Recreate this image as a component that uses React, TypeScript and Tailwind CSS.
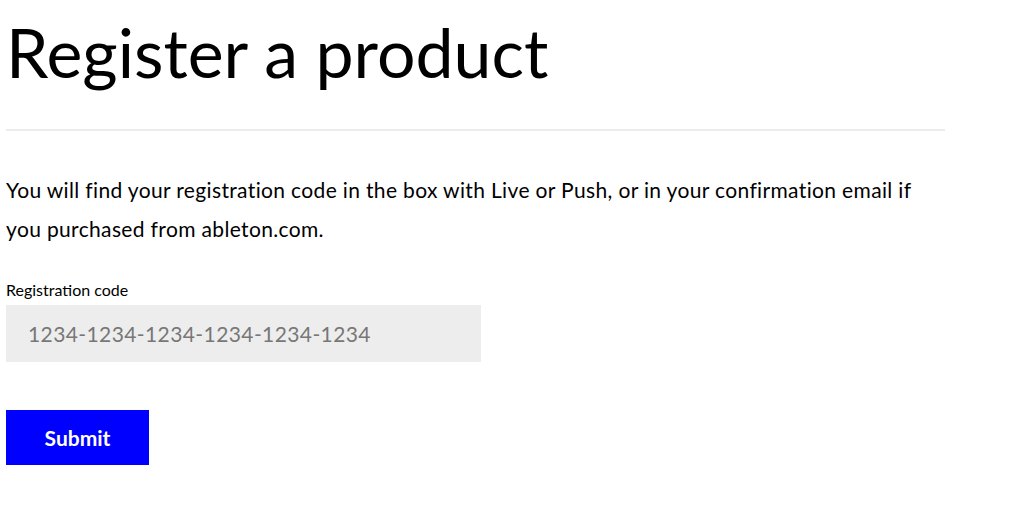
import React from "react";

export default function App() {
  return (
    <div className="min-h-[507px] bg-white text-black">
      <div className="w-[939px] ml-[6px] font-['Lato',_'Noto_Sans',_sans-serif]">
        <h1 className="pt-[10px] pb-[35px] text-[68px] leading-[84px] font-normal">
          Register a product
        </h1>
        <div className="h-[2px] bg-[#ececec]" />
        <p className="mt-[39px] text-[21px] leading-[39px] tracking-[0.35px]">
          You will find your registration code in the box with Live or Push, or in your confirmation email if you purchased from ableton.com.
        </p>
        <label className="mt-[32px] block text-[16px] leading-[20px]">Registration code</label>
        <div className="mt-[5px] w-[475px] h-[57px] bg-[#ededed] flex items-center pl-[22px]">
          <input
            className="w-full bg-transparent outline-none text-[21px] tracking-[0.4px] text-black placeholder:text-[#777]"
            placeholder="1234-1234-1234-1234-1234-1234"
          />
        </div>
        <button className="mt-[48px] w-[143px] h-[55px] bg-[#0000ff] text-white text-[21px] font-bold">
          Submit
        </button>
      </div>
    </div>
  );
}
